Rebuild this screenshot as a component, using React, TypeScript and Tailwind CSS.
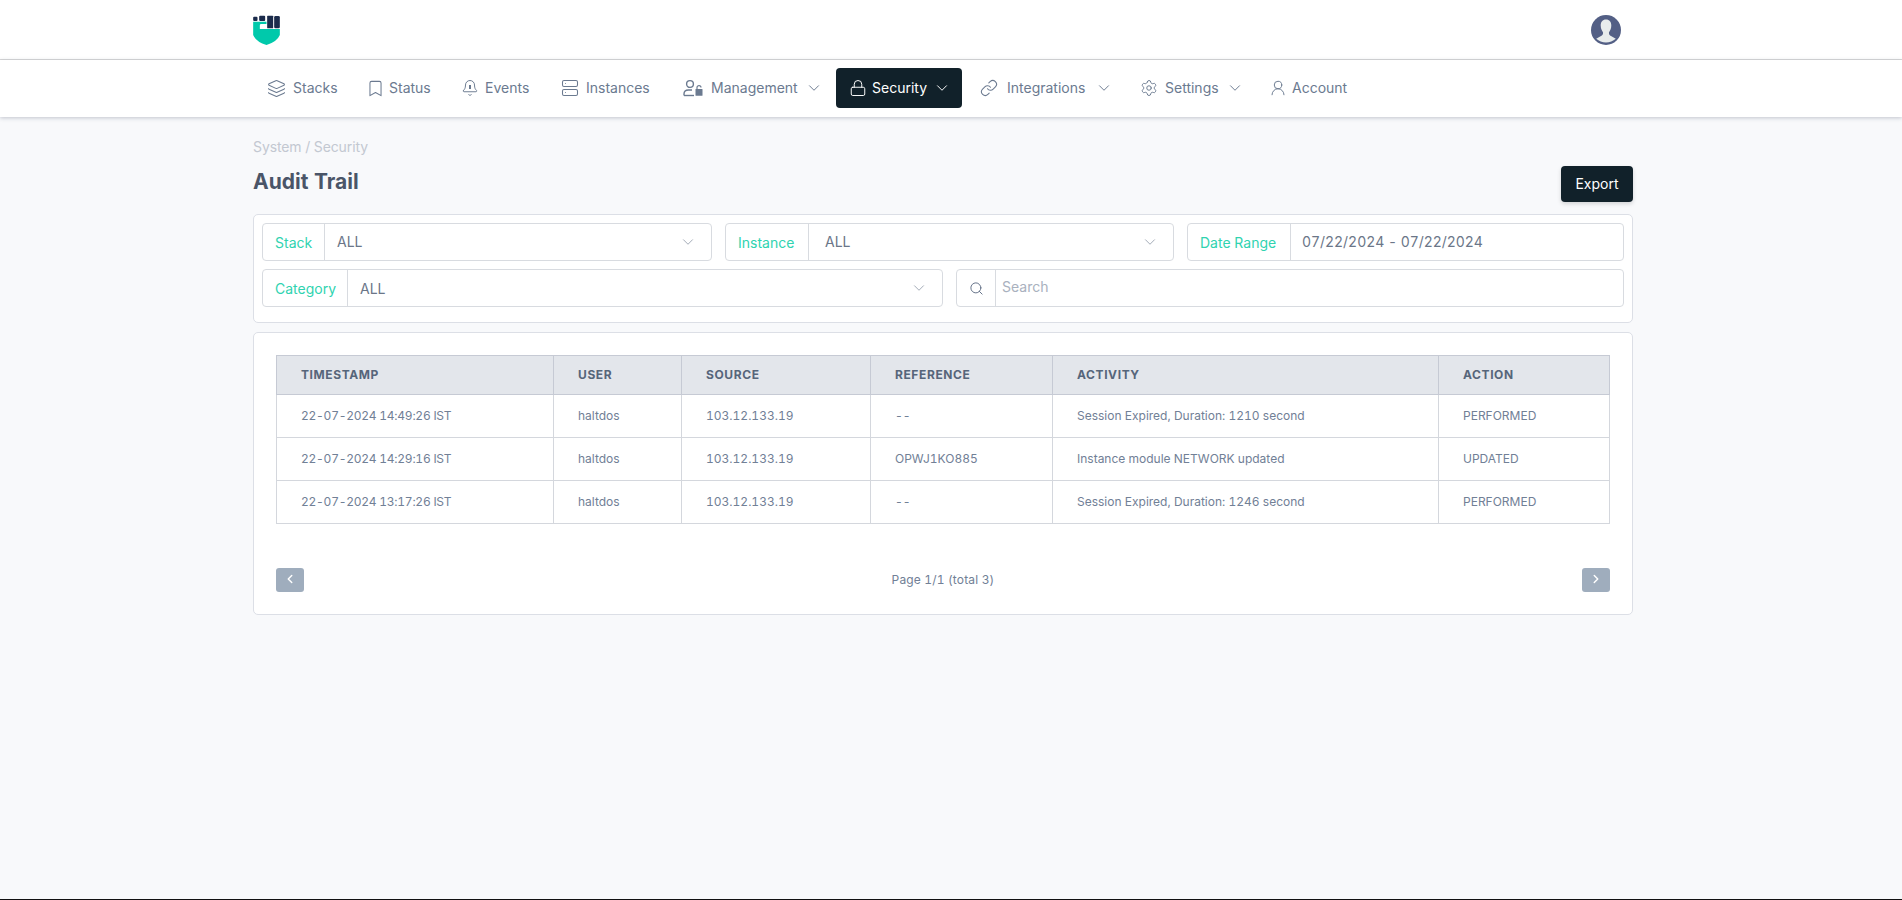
import { Bell, Bookmark, ChevronDown, ChevronLeft, ChevronRight, Layers, Link, Lock, Search, Server, Settings, UserRound } from "lucide-react";
import type { ReactNode } from "react";

function Logo() {
  return (
    <svg viewBox="40 52 80 90" className="h-[30px] w-[27px]">
      <path d="M40 72H80V79H64Q60 79 60 83V94H120V112Q112 132 80 142Q48 132 40 112Z" fill="#00c9ab" />
      <rect x="40" y="57" width="13" height="13" rx="3" fill="#1b2b4b" />
      <rect x="58" y="54" width="18" height="16" rx="3" fill="#1b2b4b" />
      <rect x="82" y="54" width="18" height="38" rx="2" fill="#1b2b4b" />
      <rect x="103" y="55" width="17" height="37" rx="4" fill="#1b2b4b" />
    </svg>
  );
}

function Avatar() {
  return (
    <svg viewBox="0 0 30 30" className="h-[30px] w-[30px]">
      <circle cx="15" cy="15" r="15" fill="#535f85" />
      <path d="M15 4.5C11.5 4.5 9.7 7 9.7 10.5C9.7 13.5 11 16 12 17.3C12.2 19 11.6 20.2 10 21L5.2 23.8A15 15 0 0 0 24.8 23.8L20 21C18.4 20.2 17.8 19 18 17.3C19 16 20.3 13.5 20.3 10.5C20.3 7 18.5 4.5 15 4.5Z" fill="#e8ecec" />
    </svg>
  );
}

function BellAlert() {
  return (
    <span className="relative flex h-[18px] w-[18px] shrink-0 items-center justify-center">
      <Bell size={18} strokeWidth={1.3} />
      <span className="absolute top-[5.5px] left-[8.25px] h-[4.5px] w-[1.5px] bg-current" />
    </span>
  );
}

function UserLockIcon() {
  return (
    <svg viewBox="0 0 20 18" className="h-[18px] w-[20px] shrink-0" fill="none" stroke="currentColor" strokeWidth="1.4">
      <circle cx="7" cy="5" r="3.4" />
      <path d="M1 16.5V15C1 12.5 3 11 5.5 11H9" />
      <path d="M1 16.5H11" />
      <path d="M14 10V8.6A2 2 0 0 1 18 8.6" strokeWidth="1.2" />
      <rect x="12.5" y="10" width="7" height="6.8" rx="0.6" fill="currentColor" stroke="none" />
    </svg>
  );
}

type NavItem = { label: string; icon: ReactNode; slot: string; text: string; menu?: boolean; active?: boolean };

const navItems: NavItem[] = [
  { label: "Stacks", slot: "w-[17px]", text: "w-[44px]", icon: <Layers size={19} strokeWidth={1.3} className="shrink-0" /> },
  { label: "Status", slot: "w-[12px]", text: "w-[42px]", icon: <Bookmark size={19} strokeWidth={1.3} className="shrink-0" /> },
  { label: "Events", slot: "w-[14px]", text: "w-[45px]", icon: <BellAlert /> },
  { label: "Instances", slot: "w-[16px]", text: "w-[65px]", icon: <Server size={18} strokeWidth={1.4} className="shrink-0" /> },
  { label: "Management", slot: "w-[20px]", text: "w-[87px]", icon: <UserLockIcon />, menu: true },
  { label: "Security", slot: "w-[13px]", text: "w-[54px]", icon: <Lock size={18} strokeWidth={1.3} className="shrink-0" />, menu: true, active: true },
  { label: "Integrations", slot: "w-[20px]", text: "w-[81px]", icon: <Link size={18} strokeWidth={1.4} className="shrink-0" />, menu: true },
  { label: "Settings", slot: "w-[16px]", text: "w-[54px]", icon: <Settings size={18} strokeWidth={1.3} className="shrink-0" />, menu: true },
  { label: "Account", slot: "w-[12px]", text: "w-[55px]", icon: <UserRound size={18} strokeWidth={1.3} className="shrink-0" /> },
];

const rows = [
  ["22-07-2024 14:49:26 IST", "haltdos", "103.12.133.19", "--", "Session Expired, Duration: 1210 second", "PERFORMED"],
  ["22-07-2024 14:29:16 IST", "haltdos", "103.12.133.19", "OPWJ1KO885", "Instance module NETWORK updated", "UPDATED"],
  ["22-07-2024 13:17:26 IST", "haltdos", "103.12.133.19", "--", "Session Expired, Duration: 1246 second", "PERFORMED"],
];

const columns = ["TIMESTAMP", "USER", "SOURCE", "REFERENCE", "ACTIVITY", "ACTION"];

function FilterSelect({ label, labelWidth, pad }: { label: string; labelWidth: string; pad: string }) {
  return (
    <div className="flex h-[38px] items-center rounded-[4px] border border-[#d8dbe0] bg-white">
      <span className={`${labelWidth} flex h-full shrink-0 items-center border-r border-[#d8dbe0] pl-[12px] text-[14px] text-[#30d3b0]`}>{label}</span>
      <span className={`${pad} flex-1 text-[14px] text-[#6b7688]`}>ALL</span>
      <ChevronDown size={18} strokeWidth={1.2} className="mr-[14px] text-[#9aa3b0]" />
    </div>
  );
}

export default function App() {
  return (
    <div className="flex h-[900px] flex-col border-b border-[#111] bg-[#f8f9fb] font-['Inter',sans-serif] tabular-nums">
      <div className="h-[60px] border-b border-[#d9d9d9] bg-white pr-4">
        <div className="mx-auto flex h-full w-[1380px] items-center justify-between pr-[12px]">
          <Logo />
          <Avatar />
        </div>
      </div>

      <nav className="h-[57px] bg-white pr-4 shadow-[0_1px_4px_rgba(30,40,70,0.25)]">
        <div className="mx-auto flex w-[1380px] items-center gap-[2px] pt-[8px]">
          {navItems.map((item) => (
            <a
              key={item.label}
              className={`flex h-[40px] items-center gap-[8px] rounded-[4px] px-[15px] text-[14px] ${
                item.active ? "bg-[#11212a] text-white" : "text-[#6b7a90]"
              }`}
            >
              <span className={`${item.slot} flex justify-center`}>{item.icon}</span>
              <span className={`${item.text} pb-[1px] whitespace-nowrap`}>{item.label}</span>
              {item.menu && (
                <span className="ml-[3px] flex w-[10px] justify-center">
                  <ChevronDown size={18} strokeWidth={1.3} className="shrink-0" />
                </span>
              )}
            </a>
          ))}
        </div>
      </nav>

      <main className="flex-1 pr-4">
        <div className="mx-auto w-[1380px]">
          <div className="flex h-[85px] items-end justify-between">
            <div className="self-start pt-[20px]">
              <p className="text-[14px] leading-[20px] tracking-[-0.1px] text-[#c3c8d1]">System / Security</p>
              <h1 className="mt-[11px] text-[21px] leading-[28px] font-bold text-[#4a5568]">Audit Trail</h1>
            </div>
            <button className="h-[36px] w-[72px] rounded-[4px] bg-[#11212a] pb-[2px] text-[14px] text-white shadow-[0_2px_4px_rgba(0,0,0,0.15)]">Export</button>
          </div>

          <section className="mt-[12px] flex flex-col gap-[8px] rounded-[5px] border border-[#dcdfe6] bg-white px-[8px] pt-[8px] pb-[15px]">
            <div className="grid grid-cols-[450px_449px_437px] gap-[13px]">
              <FilterSelect label="Stack" labelWidth="w-[62px]" pad="pl-[12px] pb-[2px]" />
              <FilterSelect label="Instance" labelWidth="w-[83px]" pad="pl-[16px] pb-[2px]" />
              <div className="flex h-[38px] items-center rounded-[4px] border border-[#d8dbe0] bg-white">
                <span className="flex h-full w-[103px] items-center border-r border-[#d8dbe0] pl-[12px] text-[14px] text-[#30d3b0]">Date Range</span>
                <span className="pb-[1px] pl-[11px] text-[14px] tracking-[-0.05px] text-[#6b7688]">07/22/2024 - 07/22/2024</span>
              </div>
            </div>
            <div className="grid grid-cols-[681px_668px] gap-[13px]">
              <FilterSelect label="Category" labelWidth="w-[85px]" pad="pl-[12px]" />
              <div className="flex h-[38px] items-center rounded-[4px] border border-[#d8dbe0] bg-white">
                <span className="flex h-full w-[39px] items-center justify-center border-r border-[#d8dbe0] text-[#5d6b82]">
                  <Search size={15} strokeWidth={1.5} />
                </span>
                <span className="pb-[3px] pl-[6px] text-[14px] text-[#a9b1be]">Search</span>
              </div>
            </div>
          </section>

          <section className="mt-[9px] rounded-[5px] border border-[#dcdfe6] bg-white px-[22px] pt-[22px] pb-[22px]">
            <table className="w-[1333px] table-fixed border-collapse text-left">
              <colgroup>
                <col className="w-[277px]" />
                <col className="w-[128px]" />
                <col className="w-[189px]" />
                <col className="w-[182px]" />
                <col className="w-[386px]" />
                <col className="w-[171px]" />
              </colgroup>
              <thead>
                <tr className="h-[39px] bg-[#e3e6eb]">
                  {columns.map((c) => (
                    <th key={c} className="border border-[#c6cad4] pl-[24px] text-[12px] font-bold tracking-[0.6px] text-[#56657a]">{c}</th>
                  ))}
                </tr>
              </thead>
              <tbody>
                {rows.map((row) => (
                  <tr key={row[0]} className="h-[43px]">
                    {row.map((cell, i) => (
                      <td key={i} className={`border border-[#d4d7dd] pl-[24px] text-[12px] text-[#718096] ${i === 0 ? "tracking-[-0.25px]" : ""}`}>{cell}</td>
                    ))}
                  </tr>
                ))}
              </tbody>
            </table>

            <div className="mt-[44px] flex items-center justify-between">
              <button className="flex h-[24px] w-[28px] items-center justify-center rounded-[3px] bg-[#9fadbd] pb-[2px] text-white">
                <ChevronLeft size={14} strokeWidth={2.5} />
              </button>
              <span className="pb-[1px] text-[12px] tracking-[0.15px] text-[#718096]">Page 1/1 (total 3)</span>
              <button className="flex h-[24px] w-[28px] items-center justify-center rounded-[3px] bg-[#9fadbd] pb-[2px] text-white">
                <ChevronRight size={14} strokeWidth={2.5} />
              </button>
            </div>
          </section>
        </div>
      </main>
    </div>
  );
}
